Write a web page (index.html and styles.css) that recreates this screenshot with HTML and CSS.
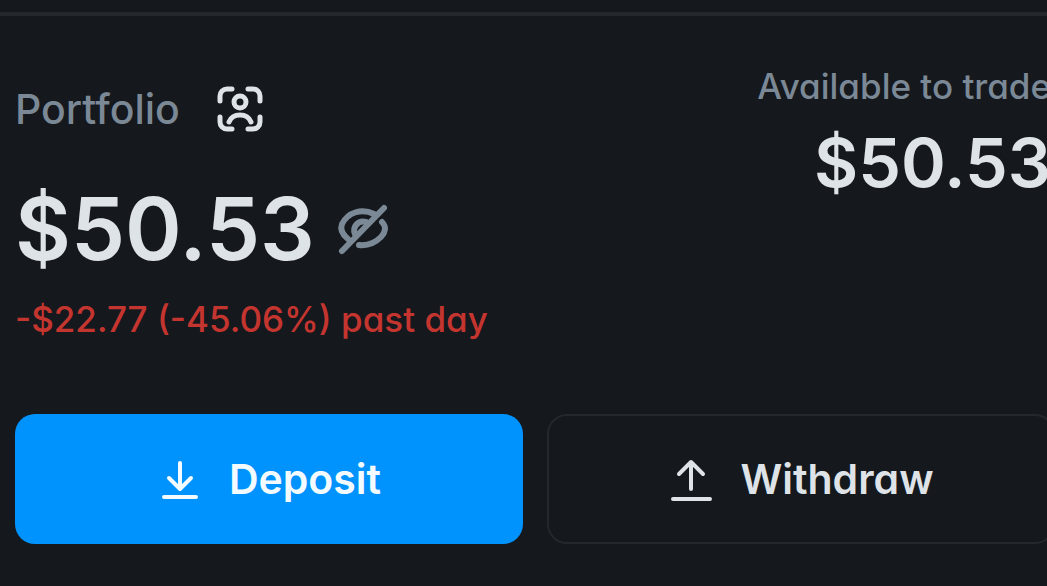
FILE: index.html
```html
<!DOCTYPE html>
<html lang="en">
<head>
    <meta charset="UTF-8">
    <title>Portfolio</title>
    <link rel="stylesheet" href="styles.css">
</head>
<body>
<main class="portfolio">
    <div class="summary">
        <section class="balance">
            <div class="title-row">
                <h1 class="label">Portfolio</h1>
                <button class="icon-btn" type="button" aria-label="Share card">
                    <svg class="scan" viewBox="0 0 46 46">
                        <path d="M3 15V10a7 7 0 0 1 7-7h5M31 3h5a7 7 0 0 1 7 7v5M43 31v5a7 7 0 0 1-7 7h-5M15 43h-5a7 7 0 0 1-7-7v-5"/>
                        <circle cx="23" cy="16" r="6"/>
                        <path d="M12 36c2-5 6-7 11-7s9 2 11 7"/>
                    </svg>
                </button>
            </div>
            <div class="amount-row">
                <span class="amount">$50.53</span>
                <button class="icon-btn" type="button" aria-label="Hide balance">
                    <svg class="eye" viewBox="0 0 50 50">
                        <path d="M36 10C24 4 10 8 4 20c-2 5 0 10 6 15M44 18c5 5 3 11-1 15-6 6-13 9-22 8"/>
                        <path d="M17 30c-3-7 3-14 11-12"/>
                        <path class="slash" d="M4 47L46 4"/>
                    </svg>
                </button>
            </div>
            <p class="change">-$22.77 (-45.06%) past day</p>
        </section>
        <section class="available">
            <h2 class="available-label">Available to trade</h2>
            <span class="available-amount">$50.53</span>
        </section>
    </div>
    <div class="actions">
        <button class="btn btn-deposit" type="button">
            <svg class="arrow" viewBox="0 0 42 42">
                <path d="M23 5v26M12 20l11 11 11-11M7 39h32"/>
            </svg>
            Deposit
        </button>
        <button class="btn btn-withdraw" type="button">
            <svg class="arrow" viewBox="0 0 42 42">
                <path d="M23 31V4M11 16L23 4l12 12M5 41h37"/>
            </svg>
            Withdraw
        </button>
    </div>
</main>
</body>
</html>
```

FILE: styles.css
```css
*{
    box-sizing: border-box;
    padding: 0;
    margin: 0;
}
body{
    background: #15181d;
    color: #dee3e7;
    font-family: Inter, "Liberation Sans", sans-serif;
    /* single-storey a */
    font-feature-settings: "cv11";
    overflow: hidden;
}
button{
    font: inherit;
    font-feature-settings: inherit;
    color: inherit;
    background: none;
    border: none;
    cursor: pointer;
}
svg{
    display: block;
    overflow: visible;
    fill: none;
    stroke: currentColor;
    stroke-linecap: round;
    stroke-linejoin: round;
}
/* the panel runs a little past the right edge */
.portfolio{
    margin: 12px -8px 0 0;
    padding: 0 0 40px 15px;
    border-top: 4px solid #24282d;
}
.summary{
    display: flex;
    justify-content: space-between;
    align-items: flex-start;
}
.balance{
    padding-top: 68px;
}
.title-row{
    display: flex;
    align-items: center;
    gap: 37px;
    height: 50px;
}
.label,
.available-label{
    color: #7b8996;
    font-weight: 500;
}
.label{
    font-size: 41px;
}
.scan{
    width: 46px;
    height: 46px;
    stroke-width: 5;
    color: #dee3e7;
}
.amount-row{
    display: flex;
    align-items: center;
    gap: 23px;
    height: 110px;
    margin-top: 40px;
}
.amount{
    font-size: 86px;
    font-weight: 600;
}
.eye{
    width: 50px;
    height: 50px;
    stroke-width: 6;
    color: #7b8996;
}
.change{
    color: #c4352f;
    font-size: 35px;
    font-weight: 500;
    line-height: 44px;
    margin-top: 13px;
}
.available{
    display: flex;
    flex-direction: column;
    align-items: flex-end;
    padding: 48px 4px 0 0;
}
.available-label{
    font-size: 35px;
    line-height: 44px;
}
.available-amount{
    font-size: 68px;
    font-weight: 600;
    line-height: 88px;
    margin-top: 10px;
}
.actions{
    display: grid;
    grid-template-columns: 1fr 1fr;
    gap: 24px;
    margin-top: 73px;
}
.btn{
    display: flex;
    align-items: center;
    justify-content: center;
    gap: 30px;
    height: 130px;
    border-radius: 20px;
    font-size: 41px;
    font-weight: 600;
}
.btn-deposit{
    background: #0093fd;
    color: #f3fbff;
}
.btn-withdraw{
    border: 2px solid #24282d;
}
.arrow{
    width: 42px;
    height: 42px;
    stroke-width: 4;
}
```
